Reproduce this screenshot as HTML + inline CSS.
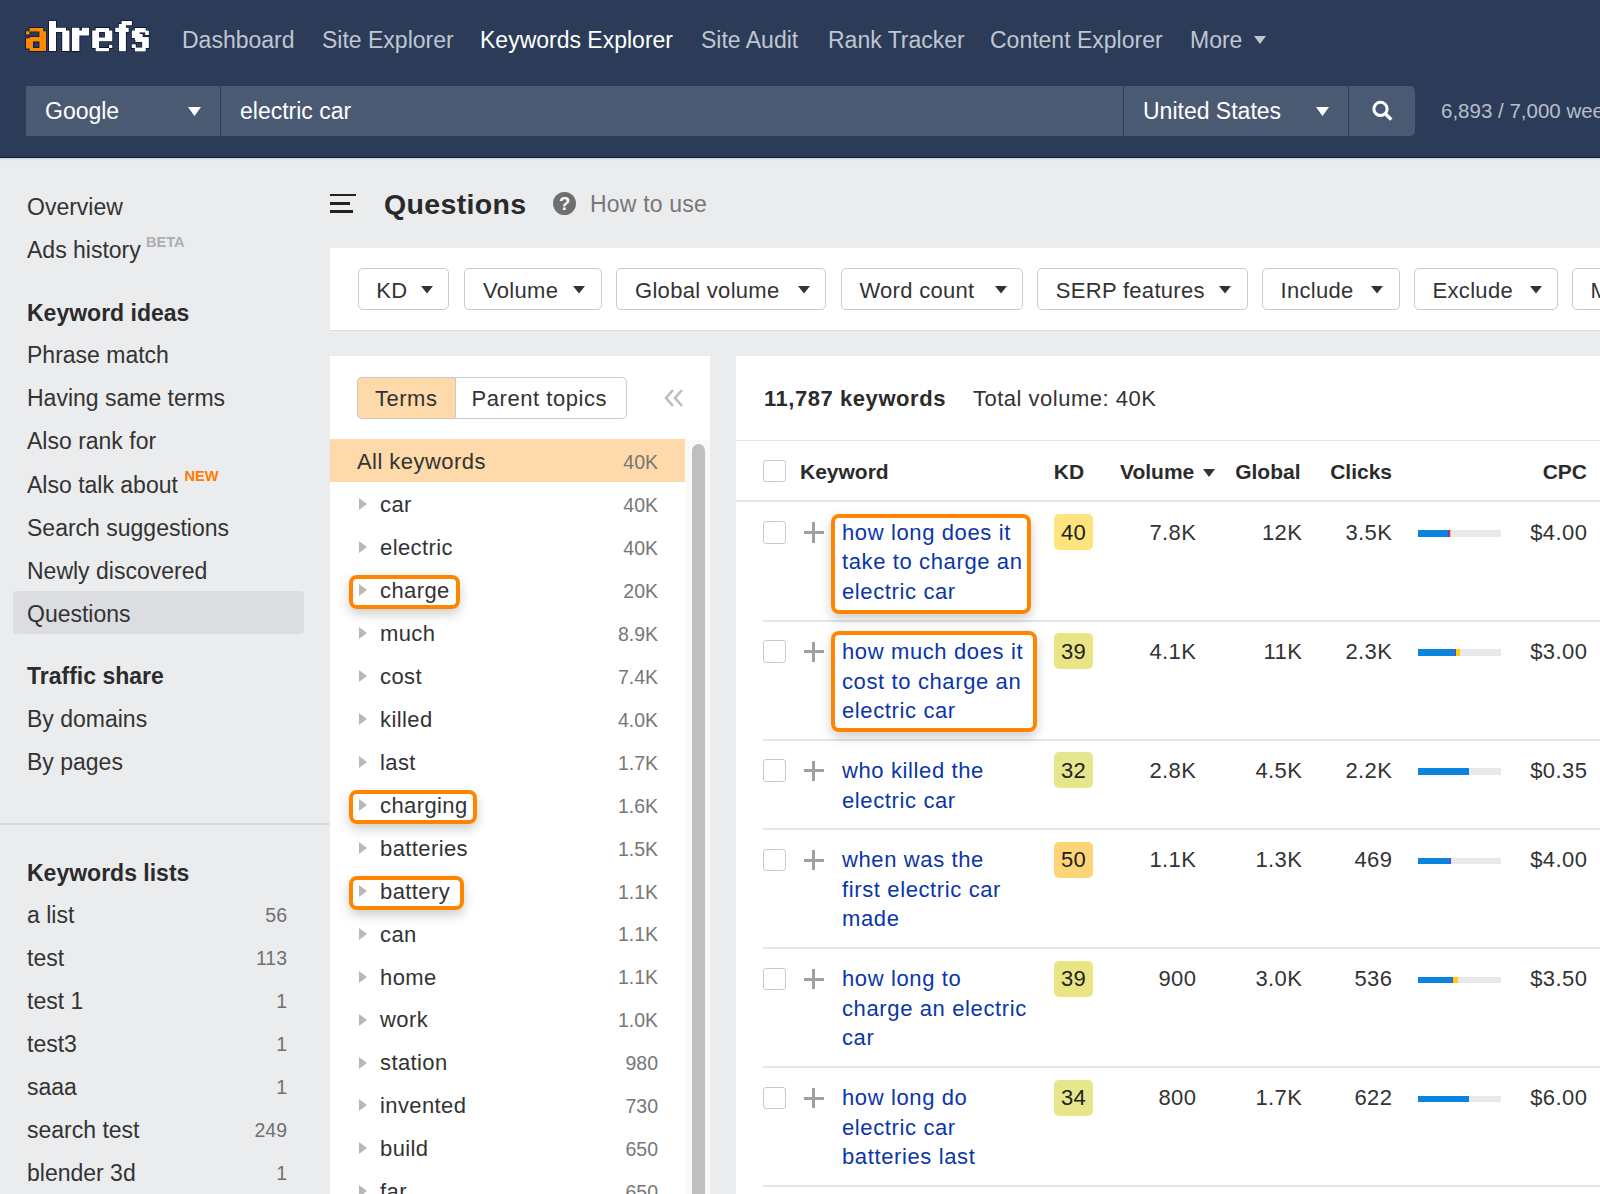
<!DOCTYPE html>
<html><head><meta charset="utf-8"><style>
html,body{margin:0;padding:0;width:1600px;height:1194px;overflow:hidden;background:#ebecee}
body{position:relative;font-family:"Liberation Sans",sans-serif}
.t{position:absolute;white-space:nowrap}
.r{position:absolute}
</style></head><body>
<div class="r" style="left:0px;top:0px;width:1600px;height:157px;background:#2c3b58"></div>
<div class="r" style="left:0px;top:157px;width:1600px;height:1px;background:#0b1c42"></div>
<svg class="r" style="left:0;top:0" width="160" height="60"><path d="M29.6 28H43.3V31.3H46.1V51H29.6V48.4H26V38.2H29.6V37.1H39.4V31.5H29.6V34.5H26V31.3H29.6Z M33 41.6V48H39.4V41.6Z" fill="#ff8800" fill-rule="evenodd" stroke="#0a1838" stroke-width="1.6" paint-order="stroke"/><path d="M49 21H56V27.7H66V30.5H69.4V51.1H62.2V31.9H56V51.1H49ZM71.9 27.8H79.4V30.5H81.9V27.8H89.1V35.5H79.4V51.1H71.9ZM95.65 27.9H109.06V30.6H112.3V41.3H99.1V47.9H109.06V44.8H112.3V47.9H109.06V51.2H95.65V47.9H92.2V30.6H95.65ZM99.1 31.9V37.5H104.9V31.9ZM121.6 21H131.9V25.2H125.9V27.8H128.7V31.9H125.9V51.2H118.9V31.9H115.2V27.8H118.9V24H121.6Z" fill="#ffffff" fill-rule="evenodd" stroke="#0a1838" stroke-width="1.6" paint-order="stroke"/><path d="M134.9 27.9H145.5V32.2H134.9ZM131.9 30.7H139.4V37.9H131.9ZM145.5 30.7H148.6V34.9H145.5ZM139.4 34H142.4V40H139.4ZM134.9 37.3H145.5V40H134.9ZM142.4 37.3H148.6V48.1H142.4ZM135.6 40H148.6V42H135.6ZM131.9 44.5H135.6V48.1H131.9ZM134.9 47.8H145.5V51.2H134.9Z" fill="#ffffff" stroke="#0a1838" stroke-width="1.6" paint-order="stroke"/><path d="M134.9 27.9H145.5V32.2H134.9ZM131.9 30.7H139.4V37.9H131.9ZM145.5 30.7H148.6V34.9H145.5ZM139.4 34H142.4V40H139.4ZM134.9 37.3H145.5V40H134.9ZM142.4 37.3H148.6V48.1H142.4ZM135.6 40H148.6V42H135.6ZM131.9 44.5H135.6V48.1H131.9ZM134.9 47.8H145.5V51.2H134.9Z" fill="#ffffff"/></svg>
<div class="t" style="left:182px;top:25.03px;font-size:23px;line-height:30px;font-weight:400;color:#bfc6d1;">Dashboard</div>
<div class="t" style="left:322px;top:25.03px;font-size:23px;line-height:30px;font-weight:400;color:#bfc6d1;">Site Explorer</div>
<div class="t" style="left:480px;top:25.03px;font-size:23px;line-height:30px;font-weight:400;color:#ffffff;">Keywords Explorer</div>
<div class="t" style="left:701px;top:25.03px;font-size:23px;line-height:30px;font-weight:400;color:#bfc6d1;">Site Audit</div>
<div class="t" style="left:828px;top:25.03px;font-size:23px;line-height:30px;font-weight:400;color:#bfc6d1;">Rank Tracker</div>
<div class="t" style="left:990px;top:25.03px;font-size:23px;line-height:30px;font-weight:400;color:#bfc6d1;">Content Explorer</div>
<div class="t" style="left:1190px;top:25.03px;font-size:23px;line-height:30px;font-weight:400;color:#bfc6d1;">More</div>
<svg class="r" style="left:1254px;top:36px" width="12" height="8" viewBox="0 0 12 8"><path d="M0 0H12L6.0 8Z" fill="#bfc6d1"/></svg>
<div class="r" style="left:26px;top:86px;width:194px;height:50px;background:#4a5a73"></div>
<div class="r" style="left:221px;top:86px;width:902px;height:50px;background:#4a5a73"></div>
<div class="r" style="left:1124px;top:86px;width:224px;height:50px;background:#4a5a73"></div>
<div class="r" style="left:1349px;top:86px;width:66px;height:50px;background:#4a5a73;border-radius:0 5px 5px 0"></div>
<div class="t" style="left:45px;top:96.03px;font-size:23px;line-height:30px;font-weight:400;color:#ffffff;">Google</div>
<svg class="r" style="left:188px;top:107px" width="13" height="9" viewBox="0 0 13 9"><path d="M0 0H13L6.5 9Z" fill="#ffffff"/></svg>
<div class="t" style="left:240px;top:96.03px;font-size:23px;line-height:30px;font-weight:400;color:#ffffff;">electric car</div>
<div class="t" style="left:1143px;top:96.03px;font-size:23px;line-height:30px;font-weight:400;color:#ffffff;">United States</div>
<svg class="r" style="left:1316px;top:107px" width="13" height="9" viewBox="0 0 13 9"><path d="M0 0H13L6.5 9Z" fill="#ffffff"/></svg>
<svg class="r" style="left:1368px;top:96px" width="28" height="30" viewBox="0 0 28 30"><circle cx="12.5" cy="12.9" r="6.6" fill="none" stroke="#fff" stroke-width="3"/><path d="M17.3 17.7L23.3 23.6" stroke="#fff" stroke-width="3.4" stroke-linecap="butt"/></svg>
<div class="t" style="left:1441px;top:97.40px;font-size:20.5px;line-height:27px;font-weight:400;color:#b7bfcb;">6,893 / 7,000 weekly</div>
<div class="r" style="left:0px;top:158px;width:1600px;height:1036px;background:#ebecee"></div>
<div class="r" style="left:0px;top:158px;width:1600px;height:3px;background:linear-gradient(#d5d7db,#ebecee)"></div>
<div class="t" style="left:27px;top:191.63px;font-size:23px;line-height:30px;font-weight:400;color:#333;">Overview</div>
<div class="t" style="left:27px;top:234.63px;font-size:23px;line-height:30px;font-weight:400;color:#333;">Ads history</div>
<div class="t" style="left:146px;top:232.94px;font-size:14.6px;line-height:19px;font-weight:700;color:#acaeb1;">BETA</div>
<div class="t" style="left:27px;top:297.63px;font-size:23px;line-height:30px;font-weight:700;color:#2b2b2b;">Keyword ideas</div>
<div class="t" style="left:27px;top:339.63px;font-size:23px;line-height:30px;font-weight:400;color:#333;">Phrase match</div>
<div class="t" style="left:27px;top:382.63px;font-size:23px;line-height:30px;font-weight:400;color:#333;">Having same terms</div>
<div class="t" style="left:27px;top:425.63px;font-size:23px;line-height:30px;font-weight:400;color:#333;">Also rank for</div>
<div class="t" style="left:27px;top:469.63px;font-size:23px;line-height:30px;font-weight:400;color:#333;">Also talk about</div>
<div class="t" style="left:184.5px;top:467.44px;font-size:14.6px;line-height:19px;font-weight:700;color:#ff7a00;">NEW</div>
<div class="t" style="left:27px;top:512.63px;font-size:23px;line-height:30px;font-weight:400;color:#333;">Search suggestions</div>
<div class="t" style="left:27px;top:555.63px;font-size:23px;line-height:30px;font-weight:400;color:#333;">Newly discovered</div>
<div class="r" style="left:13px;top:591px;width:291px;height:43px;background:#dcdde1;border-radius:4px"></div>
<div class="t" style="left:27px;top:598.63px;font-size:23px;line-height:30px;font-weight:400;color:#333;">Questions</div>
<div class="t" style="left:27px;top:660.63px;font-size:23px;line-height:30px;font-weight:700;color:#2b2b2b;">Traffic share</div>
<div class="t" style="left:27px;top:703.63px;font-size:23px;line-height:30px;font-weight:400;color:#333;">By domains</div>
<div class="t" style="left:27px;top:746.63px;font-size:23px;line-height:30px;font-weight:400;color:#333;">By pages</div>
<div class="r" style="left:0px;top:823px;width:330px;height:1.5px;background:#d9dadd"></div>
<div class="t" style="left:27px;top:857.63px;font-size:23px;line-height:30px;font-weight:700;color:#2b2b2b;">Keywords lists</div>
<div class="t" style="left:27px;top:899.63px;font-size:23px;line-height:30px;font-weight:400;color:#333;">a list</div>
<div class="t" style="right:1313px;text-align:right;top:903.34px;font-size:19.5px;line-height:25px;font-weight:400;color:#707070;">56</div>
<div class="t" style="left:27px;top:942.63px;font-size:23px;line-height:30px;font-weight:400;color:#333;">test</div>
<div class="t" style="right:1313px;text-align:right;top:946.34px;font-size:19.5px;line-height:25px;font-weight:400;color:#707070;">113</div>
<div class="t" style="left:27px;top:985.63px;font-size:23px;line-height:30px;font-weight:400;color:#333;">test 1</div>
<div class="t" style="right:1313px;text-align:right;top:989.34px;font-size:19.5px;line-height:25px;font-weight:400;color:#707070;">1</div>
<div class="t" style="left:27px;top:1028.63px;font-size:23px;line-height:30px;font-weight:400;color:#333;">test3</div>
<div class="t" style="right:1313px;text-align:right;top:1032.34px;font-size:19.5px;line-height:25px;font-weight:400;color:#707070;">1</div>
<div class="t" style="left:27px;top:1071.63px;font-size:23px;line-height:30px;font-weight:400;color:#333;">saaa</div>
<div class="t" style="right:1313px;text-align:right;top:1075.34px;font-size:19.5px;line-height:25px;font-weight:400;color:#707070;">1</div>
<div class="t" style="left:27px;top:1114.63px;font-size:23px;line-height:30px;font-weight:400;color:#333;">search test</div>
<div class="t" style="right:1313px;text-align:right;top:1118.34px;font-size:19.5px;line-height:25px;font-weight:400;color:#707070;">249</div>
<div class="t" style="left:27px;top:1157.63px;font-size:23px;line-height:30px;font-weight:400;color:#333;">blender 3d</div>
<div class="t" style="right:1313px;text-align:right;top:1161.34px;font-size:19.5px;line-height:25px;font-weight:400;color:#707070;">1</div>
<div class="r" style="left:330.3px;top:193.5px;width:26px;height:2.8px;background:#222"></div>
<div class="r" style="left:330.3px;top:201.8px;width:19.7px;height:2.8px;background:#222"></div>
<div class="r" style="left:330.3px;top:210px;width:22.7px;height:2.8px;background:#222"></div>
<div class="t" style="left:384px;top:185.92px;font-size:28.5px;line-height:37px;font-weight:700;color:#2a2a2a;letter-spacing:0.35px;">Questions</div>
<div class="r" style="left:553px;top:191.7px;width:23px;height:23px;border-radius:50%;background:#6e6f71"></div>
<div class="t" style="left:553px;top:191.59px;font-size:18.5px;line-height:24px;font-weight:700;color:#ffffff;width:23.5px;text-align:center;">?</div>
<div class="t" style="left:590px;top:188.53px;font-size:23px;line-height:30px;font-weight:400;color:#777777;letter-spacing:0.2px;">How to use</div>
<div class="r" style="left:330px;top:248px;width:1270px;height:82px;background:#ffffff;box-shadow:0 1px 0 #dcdde0"></div>
<div class="r" style="left:357.6px;top:268px;width:89.8px;height:39.7px;border:1.5px solid #c9cacd;border-radius:5px;background:#fff"></div>
<div class="t" style="left:376.20000000000005px;top:275.88px;font-size:22px;line-height:29px;font-weight:400;color:#333;letter-spacing:0.3px;">KD</div>
<svg class="r" style="left:420.90000000000003px;top:286px" width="12" height="7.5" viewBox="0 0 12 7.5"><path d="M0 0H12L6.0 7.5Z" fill="#333"/></svg>
<div class="r" style="left:464.4px;top:268px;width:135.5px;height:39.7px;border:1.5px solid #c9cacd;border-radius:5px;background:#fff"></div>
<div class="t" style="left:483.0px;top:275.88px;font-size:22px;line-height:29px;font-weight:400;color:#333;letter-spacing:0.3px;">Volume</div>
<svg class="r" style="left:573.4px;top:286px" width="12" height="7.5" viewBox="0 0 12 7.5"><path d="M0 0H12L6.0 7.5Z" fill="#333"/></svg>
<div class="r" style="left:616.4px;top:268px;width:208px;height:39.7px;border:1.5px solid #c9cacd;border-radius:5px;background:#fff"></div>
<div class="t" style="left:635.0px;top:275.88px;font-size:22px;line-height:29px;font-weight:400;color:#333;letter-spacing:0.3px;">Global volume</div>
<svg class="r" style="left:797.9px;top:286px" width="12" height="7.5" viewBox="0 0 12 7.5"><path d="M0 0H12L6.0 7.5Z" fill="#333"/></svg>
<div class="r" style="left:840.8px;top:268px;width:180.5px;height:39.7px;border:1.5px solid #c9cacd;border-radius:5px;background:#fff"></div>
<div class="t" style="left:859.4px;top:275.88px;font-size:22px;line-height:29px;font-weight:400;color:#333;letter-spacing:0.3px;">Word count</div>
<svg class="r" style="left:994.8px;top:286px" width="12" height="7.5" viewBox="0 0 12 7.5"><path d="M0 0H12L6.0 7.5Z" fill="#333"/></svg>
<div class="r" style="left:1037.2px;top:268px;width:208.5px;height:39.7px;border:1.5px solid #c9cacd;border-radius:5px;background:#fff"></div>
<div class="t" style="left:1055.8px;top:275.88px;font-size:22px;line-height:29px;font-weight:400;color:#333;letter-spacing:0.3px;">SERP features</div>
<svg class="r" style="left:1219.2px;top:286px" width="12" height="7.5" viewBox="0 0 12 7.5"><path d="M0 0H12L6.0 7.5Z" fill="#333"/></svg>
<div class="r" style="left:1262px;top:268px;width:135.5px;height:39.7px;border:1.5px solid #c9cacd;border-radius:5px;background:#fff"></div>
<div class="t" style="left:1280.6px;top:275.88px;font-size:22px;line-height:29px;font-weight:400;color:#333;letter-spacing:0.3px;">Include</div>
<svg class="r" style="left:1371.0px;top:286px" width="12" height="7.5" viewBox="0 0 12 7.5"><path d="M0 0H12L6.0 7.5Z" fill="#333"/></svg>
<div class="r" style="left:1414px;top:268px;width:142px;height:39.7px;border:1.5px solid #c9cacd;border-radius:5px;background:#fff"></div>
<div class="t" style="left:1432.6px;top:275.88px;font-size:22px;line-height:29px;font-weight:400;color:#333;letter-spacing:0.3px;">Exclude</div>
<svg class="r" style="left:1529.5px;top:286px" width="12" height="7.5" viewBox="0 0 12 7.5"><path d="M0 0H12L6.0 7.5Z" fill="#333"/></svg>
<div class="r" style="left:1572px;top:268px;width:77px;height:39.7px;border:1.5px solid #c9cacd;border-radius:5px;background:#fff"></div>
<div class="t" style="left:1590.6px;top:275.88px;font-size:22px;line-height:29px;font-weight:400;color:#333;letter-spacing:0.3px;">More</div>
<svg class="r" style="left:1622.5px;top:286px" width="12" height="7.5" viewBox="0 0 12 7.5"><path d="M0 0H12L6.0 7.5Z" fill="#333"/></svg>
<div class="r" style="left:330px;top:356px;width:380px;height:838px;background:#ffffff"></div>
<div class="r" style="left:357px;top:377px;width:98px;height:42px;background:#fed9a9;border:1.5px solid #cbc8c2;border-right:none;border-radius:5px 0 0 5px;box-sizing:border-box"></div>
<div class="r" style="left:455px;top:377px;width:172px;height:42px;background:#fff;border:1.5px solid #cacbce;border-radius:0 5px 5px 0;box-sizing:border-box"></div>
<div class="t" style="left:375px;top:384.38px;font-size:22px;line-height:29px;font-weight:400;color:#333;letter-spacing:0.5px;">Terms</div>
<div class="t" style="left:471.5px;top:384.38px;font-size:22px;line-height:29px;font-weight:400;color:#333;letter-spacing:0.55px;">Parent topics</div>
<svg class="r" style="left:662px;top:388px" width="24" height="20" viewBox="0 0 24 20"><path d="M11 2L4 10L11 18M20 2L13 10L20 18" fill="none" stroke="#bdbdbd" stroke-width="2.6"/></svg>
<div class="r" style="left:686px;top:440px;width:24px;height:754px;background:#f9f9f9"></div>
<div class="r" style="left:692px;top:444px;width:13px;height:760px;background:#bfbfbf;border-radius:7px"></div>
<div class="r" style="left:330px;top:439px;width:355px;height:43px;background:#fed9a9"></div>
<div class="t" style="left:357px;top:447.38px;font-size:22px;line-height:29px;font-weight:400;color:#333;letter-spacing:0.45px;">All keywords</div>
<div class="t" style="right:942px;text-align:right;top:450.24px;font-size:19.5px;line-height:25px;font-weight:400;color:#777;">40K</div>
<svg class="r" style="left:359px;top:498.43px" width="8" height="12" viewBox="0 0 8 12"><path d="M0 0L8 6.0L0 12Z" fill="#b8b8b8"/></svg>
<div class="t" style="left:380px;top:490.31px;font-size:22px;line-height:29px;font-weight:400;color:#333;letter-spacing:0.4px;">car</div>
<div class="t" style="right:942px;text-align:right;top:493.17px;font-size:19.5px;line-height:25px;font-weight:400;color:#777;">40K</div>
<svg class="r" style="left:359px;top:541.36px" width="8" height="12" viewBox="0 0 8 12"><path d="M0 0L8 6.0L0 12Z" fill="#b8b8b8"/></svg>
<div class="t" style="left:380px;top:533.24px;font-size:22px;line-height:29px;font-weight:400;color:#333;letter-spacing:0.4px;">electric</div>
<div class="t" style="right:942px;text-align:right;top:536.10px;font-size:19.5px;line-height:25px;font-weight:400;color:#777;">40K</div>
<svg class="r" style="left:359px;top:584.29px" width="8" height="12" viewBox="0 0 8 12"><path d="M0 0L8 6.0L0 12Z" fill="#b8b8b8"/></svg>
<div class="t" style="left:380px;top:576.17px;font-size:22px;line-height:29px;font-weight:400;color:#333;letter-spacing:0.4px;">charge</div>
<div class="t" style="right:942px;text-align:right;top:579.03px;font-size:19.5px;line-height:25px;font-weight:400;color:#777;">20K</div>
<svg class="r" style="left:359px;top:627.22px" width="8" height="12" viewBox="0 0 8 12"><path d="M0 0L8 6.0L0 12Z" fill="#b8b8b8"/></svg>
<div class="t" style="left:380px;top:619.10px;font-size:22px;line-height:29px;font-weight:400;color:#333;letter-spacing:0.4px;">much</div>
<div class="t" style="right:942px;text-align:right;top:621.96px;font-size:19.5px;line-height:25px;font-weight:400;color:#777;">8.9K</div>
<svg class="r" style="left:359px;top:670.15px" width="8" height="12" viewBox="0 0 8 12"><path d="M0 0L8 6.0L0 12Z" fill="#b8b8b8"/></svg>
<div class="t" style="left:380px;top:662.03px;font-size:22px;line-height:29px;font-weight:400;color:#333;letter-spacing:0.4px;">cost</div>
<div class="t" style="right:942px;text-align:right;top:664.89px;font-size:19.5px;line-height:25px;font-weight:400;color:#777;">7.4K</div>
<svg class="r" style="left:359px;top:713.0799999999999px" width="8" height="12" viewBox="0 0 8 12"><path d="M0 0L8 6.0L0 12Z" fill="#b8b8b8"/></svg>
<div class="t" style="left:380px;top:704.96px;font-size:22px;line-height:29px;font-weight:400;color:#333;letter-spacing:0.4px;">killed</div>
<div class="t" style="right:942px;text-align:right;top:707.82px;font-size:19.5px;line-height:25px;font-weight:400;color:#777;">4.0K</div>
<svg class="r" style="left:359px;top:756.01px" width="8" height="12" viewBox="0 0 8 12"><path d="M0 0L8 6.0L0 12Z" fill="#b8b8b8"/></svg>
<div class="t" style="left:380px;top:747.89px;font-size:22px;line-height:29px;font-weight:400;color:#333;letter-spacing:0.4px;">last</div>
<div class="t" style="right:942px;text-align:right;top:750.75px;font-size:19.5px;line-height:25px;font-weight:400;color:#777;">1.7K</div>
<svg class="r" style="left:359px;top:798.94px" width="8" height="12" viewBox="0 0 8 12"><path d="M0 0L8 6.0L0 12Z" fill="#b8b8b8"/></svg>
<div class="t" style="left:380px;top:790.82px;font-size:22px;line-height:29px;font-weight:400;color:#333;letter-spacing:0.4px;">charging</div>
<div class="t" style="right:942px;text-align:right;top:793.68px;font-size:19.5px;line-height:25px;font-weight:400;color:#777;">1.6K</div>
<svg class="r" style="left:359px;top:841.87px" width="8" height="12" viewBox="0 0 8 12"><path d="M0 0L8 6.0L0 12Z" fill="#b8b8b8"/></svg>
<div class="t" style="left:380px;top:833.75px;font-size:22px;line-height:29px;font-weight:400;color:#333;letter-spacing:0.4px;">batteries</div>
<div class="t" style="right:942px;text-align:right;top:836.61px;font-size:19.5px;line-height:25px;font-weight:400;color:#777;">1.5K</div>
<svg class="r" style="left:359px;top:884.8px" width="8" height="12" viewBox="0 0 8 12"><path d="M0 0L8 6.0L0 12Z" fill="#b8b8b8"/></svg>
<div class="t" style="left:380px;top:876.68px;font-size:22px;line-height:29px;font-weight:400;color:#333;letter-spacing:0.4px;">battery</div>
<div class="t" style="right:942px;text-align:right;top:879.54px;font-size:19.5px;line-height:25px;font-weight:400;color:#777;">1.1K</div>
<svg class="r" style="left:359px;top:927.73px" width="8" height="12" viewBox="0 0 8 12"><path d="M0 0L8 6.0L0 12Z" fill="#b8b8b8"/></svg>
<div class="t" style="left:380px;top:919.61px;font-size:22px;line-height:29px;font-weight:400;color:#333;letter-spacing:0.4px;">can</div>
<div class="t" style="right:942px;text-align:right;top:922.47px;font-size:19.5px;line-height:25px;font-weight:400;color:#777;">1.1K</div>
<svg class="r" style="left:359px;top:970.66px" width="8" height="12" viewBox="0 0 8 12"><path d="M0 0L8 6.0L0 12Z" fill="#b8b8b8"/></svg>
<div class="t" style="left:380px;top:962.54px;font-size:22px;line-height:29px;font-weight:400;color:#333;letter-spacing:0.4px;">home</div>
<div class="t" style="right:942px;text-align:right;top:965.40px;font-size:19.5px;line-height:25px;font-weight:400;color:#777;">1.1K</div>
<svg class="r" style="left:359px;top:1013.5900000000001px" width="8" height="12" viewBox="0 0 8 12"><path d="M0 0L8 6.0L0 12Z" fill="#b8b8b8"/></svg>
<div class="t" style="left:380px;top:1005.47px;font-size:22px;line-height:29px;font-weight:400;color:#333;letter-spacing:0.4px;">work</div>
<div class="t" style="right:942px;text-align:right;top:1008.33px;font-size:19.5px;line-height:25px;font-weight:400;color:#777;">1.0K</div>
<svg class="r" style="left:359px;top:1056.52px" width="8" height="12" viewBox="0 0 8 12"><path d="M0 0L8 6.0L0 12Z" fill="#b8b8b8"/></svg>
<div class="t" style="left:380px;top:1048.40px;font-size:22px;line-height:29px;font-weight:400;color:#333;letter-spacing:0.4px;">station</div>
<div class="t" style="right:942px;text-align:right;top:1051.26px;font-size:19.5px;line-height:25px;font-weight:400;color:#777;">980</div>
<svg class="r" style="left:359px;top:1099.45px" width="8" height="12" viewBox="0 0 8 12"><path d="M0 0L8 6.0L0 12Z" fill="#b8b8b8"/></svg>
<div class="t" style="left:380px;top:1091.33px;font-size:22px;line-height:29px;font-weight:400;color:#333;letter-spacing:0.4px;">invented</div>
<div class="t" style="right:942px;text-align:right;top:1094.19px;font-size:19.5px;line-height:25px;font-weight:400;color:#777;">730</div>
<svg class="r" style="left:359px;top:1142.38px" width="8" height="12" viewBox="0 0 8 12"><path d="M0 0L8 6.0L0 12Z" fill="#b8b8b8"/></svg>
<div class="t" style="left:380px;top:1134.26px;font-size:22px;line-height:29px;font-weight:400;color:#333;letter-spacing:0.4px;">build</div>
<div class="t" style="right:942px;text-align:right;top:1137.12px;font-size:19.5px;line-height:25px;font-weight:400;color:#777;">650</div>
<svg class="r" style="left:359px;top:1185.31px" width="8" height="12" viewBox="0 0 8 12"><path d="M0 0L8 6.0L0 12Z" fill="#b8b8b8"/></svg>
<div class="t" style="left:380px;top:1177.19px;font-size:22px;line-height:29px;font-weight:400;color:#333;letter-spacing:0.4px;">far</div>
<div class="t" style="right:942px;text-align:right;top:1180.05px;font-size:19.5px;line-height:25px;font-weight:400;color:#777;">650</div>
<div class="r" style="left:736px;top:356px;width:864px;height:838px;background:#ffffff"></div>
<div class="t" style="left:764px;top:383.88px;font-size:22px;line-height:29px;font-weight:700;color:#2b2b2b;letter-spacing:0.55px;">11,787 keywords</div>
<div class="t" style="left:973px;top:383.88px;font-size:22px;line-height:29px;font-weight:400;color:#333;letter-spacing:0.5px;">Total volume: 40K</div>
<div class="r" style="left:736px;top:439.5px;width:864px;height:1.5px;background:#e4e5e8"></div>
<div class="r" style="left:736px;top:500px;width:864px;height:1.5px;background:#e4e5e8"></div>
<div class="r" style="left:763px;top:459.5px;width:22.5px;height:22.5px;border:1.5px solid #c9c9c9;border-radius:3px;box-sizing:border-box;background:#fff"></div>
<div class="t" style="left:800px;top:458.22px;font-size:21px;line-height:27px;font-weight:700;color:#2b2b2b;">Keyword</div>
<div class="t" style="left:1053.8px;top:458.22px;font-size:21px;line-height:27px;font-weight:700;color:#2b2b2b;">KD</div>
<div class="t" style="left:1120px;top:458.22px;font-size:21px;line-height:27px;font-weight:700;color:#2b2b2b;">Volume</div>
<svg class="r" style="left:1203px;top:469.2px" width="12" height="8" viewBox="0 0 12 8"><path d="M0 0H12L6.0 8Z" fill="#333"/></svg>
<div class="t" style="right:299.5px;text-align:right;top:458.22px;font-size:21px;line-height:27px;font-weight:700;color:#2b2b2b;">Global</div>
<div class="t" style="right:208px;text-align:right;top:458.22px;font-size:21px;line-height:27px;font-weight:700;color:#2b2b2b;">Clicks</div>
<div class="t" style="right:13px;text-align:right;top:458.22px;font-size:21px;line-height:27px;font-weight:700;color:#2b2b2b;">CPC</div>
<div class="r" style="left:763px;top:521.0px;width:22.5px;height:22.5px;border:1.5px solid #c9c9c9;border-radius:3px;box-sizing:border-box;background:#fff"></div>
<div class="r" style="left:803.5px;top:531.0px;width:20.5px;height:3px;background:#a0a0a0"></div>
<div class="r" style="left:812.2px;top:522.3px;width:3px;height:20.5px;background:#a0a0a0"></div>
<div class="t" style="left:842px;top:517.53px;font-size:22px;line-height:29.7px;letter-spacing:0.62px;color:#0a36a8">how long does it<br>take to charge an<br>electric car</div>
<div class="r" style="left:1054px;top:514.0px;width:39px;height:36px;background:#fde47c;border-radius:5px"></div>
<div class="t" style="left:1054px;top:517.88px;font-size:22px;line-height:29px;font-weight:400;color:#222;width:39px;text-align:center;letter-spacing:0.3px;">40</div>
<div class="t" style="right:404px;text-align:right;top:517.88px;font-size:22px;line-height:29px;font-weight:400;color:#333;letter-spacing:0.45px;margin-right:-0.45px;">7.8K</div>
<div class="t" style="right:298px;text-align:right;top:517.88px;font-size:22px;line-height:29px;font-weight:400;color:#333;letter-spacing:0.45px;margin-right:-0.45px;">12K</div>
<div class="t" style="right:208px;text-align:right;top:517.88px;font-size:22px;line-height:29px;font-weight:400;color:#333;letter-spacing:0.45px;margin-right:-0.45px;">3.5K</div>
<div class="r" style="left:1418.4px;top:530.0px;width:83px;height:6.6px;background:#e7e9ec"></div>
<div class="r" style="left:1418.4px;top:530.0px;width:30px;height:6.6px;background:#0b84dd"></div>
<div class="r" style="left:1448.4px;top:530.0px;width:1.5px;height:6.6px;background:#a526b5"></div>
<div class="r" style="left:1449.9px;top:530.0px;width:1.5px;height:6.6px;background:#ffcf00"></div>
<div class="t" style="right:13px;text-align:right;top:517.88px;font-size:22px;line-height:29px;font-weight:400;color:#333;letter-spacing:0.45px;margin-right:-0.45px;">$4.00</div>
<div class="r" style="left:763px;top:640.3px;width:22.5px;height:22.5px;border:1.5px solid #c9c9c9;border-radius:3px;box-sizing:border-box;background:#fff"></div>
<div class="r" style="left:803.5px;top:650.3px;width:20.5px;height:3px;background:#a0a0a0"></div>
<div class="r" style="left:812.2px;top:641.5999999999999px;width:3px;height:20.5px;background:#a0a0a0"></div>
<div class="t" style="left:842px;top:636.83px;font-size:22px;line-height:29.7px;letter-spacing:0.62px;color:#0a36a8">how much does it<br>cost to charge an<br>electric car</div>
<div class="r" style="left:1054px;top:633.3px;width:39px;height:36px;background:#e9e584;border-radius:5px"></div>
<div class="t" style="left:1054px;top:637.18px;font-size:22px;line-height:29px;font-weight:400;color:#222;width:39px;text-align:center;letter-spacing:0.3px;">39</div>
<div class="t" style="right:404px;text-align:right;top:637.18px;font-size:22px;line-height:29px;font-weight:400;color:#333;letter-spacing:0.45px;margin-right:-0.45px;">4.1K</div>
<div class="t" style="right:298px;text-align:right;top:637.18px;font-size:22px;line-height:29px;font-weight:400;color:#333;letter-spacing:0.45px;margin-right:-0.45px;">11K</div>
<div class="t" style="right:208px;text-align:right;top:637.18px;font-size:22px;line-height:29px;font-weight:400;color:#333;letter-spacing:0.45px;margin-right:-0.45px;">2.3K</div>
<div class="r" style="left:1418.4px;top:649.3px;width:83px;height:6.6px;background:#e7e9ec"></div>
<div class="r" style="left:1418.4px;top:649.3px;width:36.6px;height:6.6px;background:#0b84dd"></div>
<div class="r" style="left:1455.0px;top:649.3px;width:1.2px;height:6.6px;background:#a526b5"></div>
<div class="r" style="left:1456.2px;top:649.3px;width:3.7px;height:6.6px;background:#ffcf00"></div>
<div class="t" style="right:13px;text-align:right;top:637.18px;font-size:22px;line-height:29px;font-weight:400;color:#333;letter-spacing:0.45px;margin-right:-0.45px;">$3.00</div>
<div class="r" style="left:763px;top:759.3px;width:22.5px;height:22.5px;border:1.5px solid #c9c9c9;border-radius:3px;box-sizing:border-box;background:#fff"></div>
<div class="r" style="left:803.5px;top:769.3px;width:20.5px;height:3px;background:#a0a0a0"></div>
<div class="r" style="left:812.2px;top:760.5999999999999px;width:3px;height:20.5px;background:#a0a0a0"></div>
<div class="t" style="left:842px;top:755.83px;font-size:22px;line-height:29.7px;letter-spacing:0.62px;color:#0a36a8">who killed the<br>electric car</div>
<div class="r" style="left:1054px;top:752.3px;width:39px;height:36px;background:#e6e68c;border-radius:5px"></div>
<div class="t" style="left:1054px;top:756.18px;font-size:22px;line-height:29px;font-weight:400;color:#222;width:39px;text-align:center;letter-spacing:0.3px;">32</div>
<div class="t" style="right:404px;text-align:right;top:756.18px;font-size:22px;line-height:29px;font-weight:400;color:#333;letter-spacing:0.45px;margin-right:-0.45px;">2.8K</div>
<div class="t" style="right:298px;text-align:right;top:756.18px;font-size:22px;line-height:29px;font-weight:400;color:#333;letter-spacing:0.45px;margin-right:-0.45px;">4.5K</div>
<div class="t" style="right:208px;text-align:right;top:756.18px;font-size:22px;line-height:29px;font-weight:400;color:#333;letter-spacing:0.45px;margin-right:-0.45px;">2.2K</div>
<div class="r" style="left:1418.4px;top:768.3px;width:83px;height:6.6px;background:#e7e9ec"></div>
<div class="r" style="left:1418.4px;top:768.3px;width:50.6px;height:6.6px;background:#0b84dd"></div>
<div class="t" style="right:13px;text-align:right;top:756.18px;font-size:22px;line-height:29px;font-weight:400;color:#333;letter-spacing:0.45px;margin-right:-0.45px;">$0.35</div>
<div class="r" style="left:763px;top:848.5px;width:22.5px;height:22.5px;border:1.5px solid #c9c9c9;border-radius:3px;box-sizing:border-box;background:#fff"></div>
<div class="r" style="left:803.5px;top:858.5px;width:20.5px;height:3px;background:#a0a0a0"></div>
<div class="r" style="left:812.2px;top:849.8px;width:3px;height:20.5px;background:#a0a0a0"></div>
<div class="t" style="left:842px;top:845.03px;font-size:22px;line-height:29.7px;letter-spacing:0.62px;color:#0a36a8">when was the<br>first electric car<br>made</div>
<div class="r" style="left:1054px;top:841.5px;width:39px;height:36px;background:#fdd577;border-radius:5px"></div>
<div class="t" style="left:1054px;top:845.38px;font-size:22px;line-height:29px;font-weight:400;color:#222;width:39px;text-align:center;letter-spacing:0.3px;">50</div>
<div class="t" style="right:404px;text-align:right;top:845.38px;font-size:22px;line-height:29px;font-weight:400;color:#333;letter-spacing:0.45px;margin-right:-0.45px;">1.1K</div>
<div class="t" style="right:298px;text-align:right;top:845.38px;font-size:22px;line-height:29px;font-weight:400;color:#333;letter-spacing:0.45px;margin-right:-0.45px;">1.3K</div>
<div class="t" style="right:208px;text-align:right;top:845.38px;font-size:22px;line-height:29px;font-weight:400;color:#333;letter-spacing:0.45px;margin-right:-0.45px;">469</div>
<div class="r" style="left:1418.4px;top:857.5px;width:83px;height:6.6px;background:#e7e9ec"></div>
<div class="r" style="left:1418.4px;top:857.5px;width:31.6px;height:6.6px;background:#0b84dd"></div>
<div class="r" style="left:1450.0px;top:857.5px;width:1px;height:6.6px;background:#a526b5"></div>
<div class="t" style="right:13px;text-align:right;top:845.38px;font-size:22px;line-height:29px;font-weight:400;color:#333;letter-spacing:0.45px;margin-right:-0.45px;">$4.00</div>
<div class="r" style="left:763px;top:967.5px;width:22.5px;height:22.5px;border:1.5px solid #c9c9c9;border-radius:3px;box-sizing:border-box;background:#fff"></div>
<div class="r" style="left:803.5px;top:977.5px;width:20.5px;height:3px;background:#a0a0a0"></div>
<div class="r" style="left:812.2px;top:968.8px;width:3px;height:20.5px;background:#a0a0a0"></div>
<div class="t" style="left:842px;top:964.03px;font-size:22px;line-height:29.7px;letter-spacing:0.62px;color:#0a36a8">how long to<br>charge an electric<br>car</div>
<div class="r" style="left:1054px;top:960.5px;width:39px;height:36px;background:#e9e584;border-radius:5px"></div>
<div class="t" style="left:1054px;top:964.38px;font-size:22px;line-height:29px;font-weight:400;color:#222;width:39px;text-align:center;letter-spacing:0.3px;">39</div>
<div class="t" style="right:404px;text-align:right;top:964.38px;font-size:22px;line-height:29px;font-weight:400;color:#333;letter-spacing:0.45px;margin-right:-0.45px;">900</div>
<div class="t" style="right:298px;text-align:right;top:964.38px;font-size:22px;line-height:29px;font-weight:400;color:#333;letter-spacing:0.45px;margin-right:-0.45px;">3.0K</div>
<div class="t" style="right:208px;text-align:right;top:964.38px;font-size:22px;line-height:29px;font-weight:400;color:#333;letter-spacing:0.45px;margin-right:-0.45px;">536</div>
<div class="r" style="left:1418.4px;top:976.5px;width:83px;height:6.6px;background:#e7e9ec"></div>
<div class="r" style="left:1418.4px;top:976.5px;width:33.2px;height:6.6px;background:#0b84dd"></div>
<div class="r" style="left:1451.6000000000001px;top:976.5px;width:1.5px;height:6.6px;background:#a526b5"></div>
<div class="r" style="left:1453.1000000000001px;top:976.5px;width:5px;height:6.6px;background:#ffcf00"></div>
<div class="t" style="right:13px;text-align:right;top:964.38px;font-size:22px;line-height:29px;font-weight:400;color:#333;letter-spacing:0.45px;margin-right:-0.45px;">$3.50</div>
<div class="r" style="left:763px;top:1086.5px;width:22.5px;height:22.5px;border:1.5px solid #c9c9c9;border-radius:3px;box-sizing:border-box;background:#fff"></div>
<div class="r" style="left:803.5px;top:1096.5px;width:20.5px;height:3px;background:#a0a0a0"></div>
<div class="r" style="left:812.2px;top:1087.8px;width:3px;height:20.5px;background:#a0a0a0"></div>
<div class="t" style="left:842px;top:1083.03px;font-size:22px;line-height:29.7px;letter-spacing:0.62px;color:#0a36a8">how long do<br>electric car<br>batteries last</div>
<div class="r" style="left:1054px;top:1079.5px;width:39px;height:36px;background:#e6e68a;border-radius:5px"></div>
<div class="t" style="left:1054px;top:1083.38px;font-size:22px;line-height:29px;font-weight:400;color:#222;width:39px;text-align:center;letter-spacing:0.3px;">34</div>
<div class="t" style="right:404px;text-align:right;top:1083.38px;font-size:22px;line-height:29px;font-weight:400;color:#333;letter-spacing:0.45px;margin-right:-0.45px;">800</div>
<div class="t" style="right:298px;text-align:right;top:1083.38px;font-size:22px;line-height:29px;font-weight:400;color:#333;letter-spacing:0.45px;margin-right:-0.45px;">1.7K</div>
<div class="t" style="right:208px;text-align:right;top:1083.38px;font-size:22px;line-height:29px;font-weight:400;color:#333;letter-spacing:0.45px;margin-right:-0.45px;">622</div>
<div class="r" style="left:1418.4px;top:1095.5px;width:83px;height:6.6px;background:#e7e9ec"></div>
<div class="r" style="left:1418.4px;top:1095.5px;width:50.6px;height:6.6px;background:#0b84dd"></div>
<div class="t" style="right:13px;text-align:right;top:1083.38px;font-size:22px;line-height:29px;font-weight:400;color:#333;letter-spacing:0.45px;margin-right:-0.45px;">$6.00</div>
<div class="r" style="left:763px;top:620px;width:837px;height:1.5px;background:#e4e5e8"></div>
<div class="r" style="left:763px;top:739px;width:837px;height:1.5px;background:#e4e5e8"></div>
<div class="r" style="left:763px;top:828px;width:837px;height:1.5px;background:#e4e5e8"></div>
<div class="r" style="left:763px;top:947px;width:837px;height:1.5px;background:#e4e5e8"></div>
<div class="r" style="left:763px;top:1066px;width:837px;height:1.5px;background:#e4e5e8"></div>
<div class="r" style="left:763px;top:1185px;width:837px;height:1.5px;background:#e4e5e8"></div>
<div class="r" style="left:349px;top:575px;width:111px;height:34px;border:4.6px solid #ff8500;border-radius:8px;box-sizing:border-box;box-shadow:0 5px 12px rgba(0,0,0,0.2)"></div>
<div class="r" style="left:349px;top:789.5px;width:128px;height:34px;border:4.6px solid #ff8500;border-radius:8px;box-sizing:border-box;box-shadow:0 5px 12px rgba(0,0,0,0.2)"></div>
<div class="r" style="left:349px;top:875.7px;width:115px;height:34px;border:4.6px solid #ff8500;border-radius:8px;box-sizing:border-box;box-shadow:0 5px 12px rgba(0,0,0,0.2)"></div>
<div class="r" style="left:831.3px;top:513.6px;width:200px;height:100.3px;border:4.6px solid #ff8500;border-radius:8px;box-sizing:border-box;box-shadow:0 5px 12px rgba(0,0,0,0.2)"></div>
<div class="r" style="left:831.3px;top:631.3px;width:206px;height:100.5px;border:4.6px solid #ff8500;border-radius:8px;box-sizing:border-box;box-shadow:0 5px 12px rgba(0,0,0,0.2)"></div>
</body></html>
